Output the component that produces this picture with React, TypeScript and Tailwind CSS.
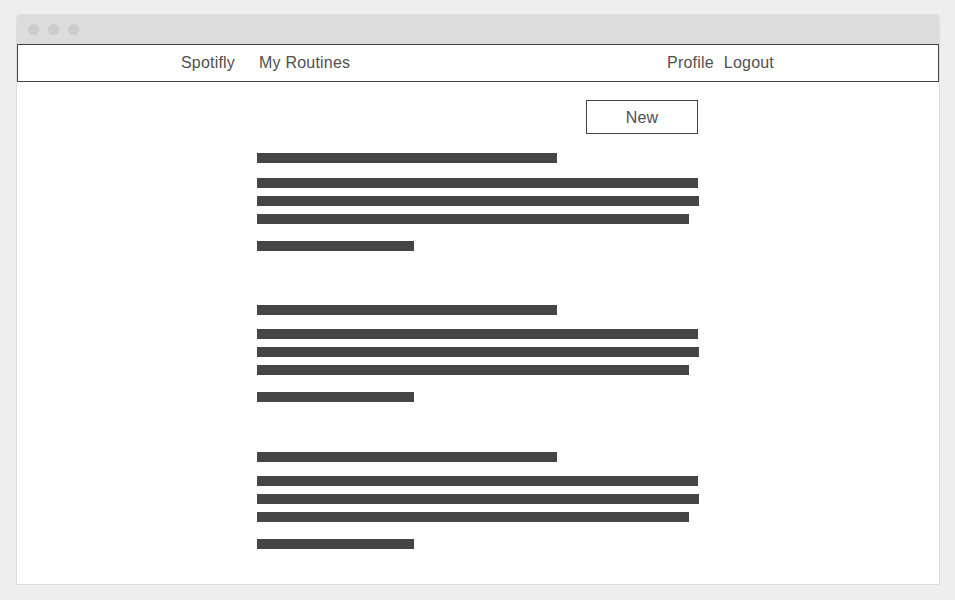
import React from 'react'

const ink = 'bg-[#454545]'

function Bar({ w }: { w: string }) {
  return <div className={`h-[10px] ${ink} ${w}`} />
}

function Routine({ className = '', gap = 'mt-[15px]' }: { className?: string; gap?: string }) {
  return (
    <div className={className}>
      <Bar w="w-[300px]" />
      <div className={`${gap} flex flex-col gap-[8px]`}>
        <Bar w="w-[441px]" />
        <Bar w="w-[442px]" />
        <Bar w="w-[432px]" />
      </div>
      <div className="mt-[17px]">
        <Bar w="w-[157px]" />
      </div>
    </div>
  )
}

export default function App() {
  return (
    <div className="min-h-[600px] bg-[#eeeeee] pt-[14px] pl-[16px]" style={{ fontFamily: '"Liberation Sans", Arial, sans-serif' }}>
      <div className="w-[924px] h-[571px] bg-white border border-[#dedede] rounded-t-[4px] overflow-hidden">
        <div className="h-[29px] bg-[#dcdcdc] flex items-center gap-[9px] pl-[11px]">
          <span className="w-[11px] h-[11px] rounded-full bg-[#cccccc]" />
          <span className="w-[11px] h-[11px] rounded-full bg-[#cccccc]" />
          <span className="w-[11px] h-[11px] rounded-full bg-[#cccccc]" />
        </div>
        <nav className="h-[38px] border border-[#444444] flex items-center text-[16px] text-[#505050] tracking-[0.2px]">
          <div className="mx-auto w-[594px] pr-[1px] flex items-center justify-between">
            <div className="flex gap-[24px]">
              <span>Spotifly</span>
              <span>My Routines</span>
            </div>
            <div className="flex gap-[10px]">
              <span>Profile</span>
              <span>Logout</span>
            </div>
          </div>
        </nav>
        <main className="mx-auto w-[442px] pt-[18px]">
          <div className="flex justify-end pr-[1px]">
            <button className="w-[112px] h-[34px] pt-[2px] border border-[#444444] text-[16px] text-[#505050] tracking-[0.2px]">
              New
            </button>
          </div>
          <Routine className="mt-[19px]" />
          <Routine className="mt-[54px]" gap="mt-[14px]" />
          <Routine className="mt-[50px]" gap="mt-[14px]" />
        </main>
      </div>
    </div>
  )
}
